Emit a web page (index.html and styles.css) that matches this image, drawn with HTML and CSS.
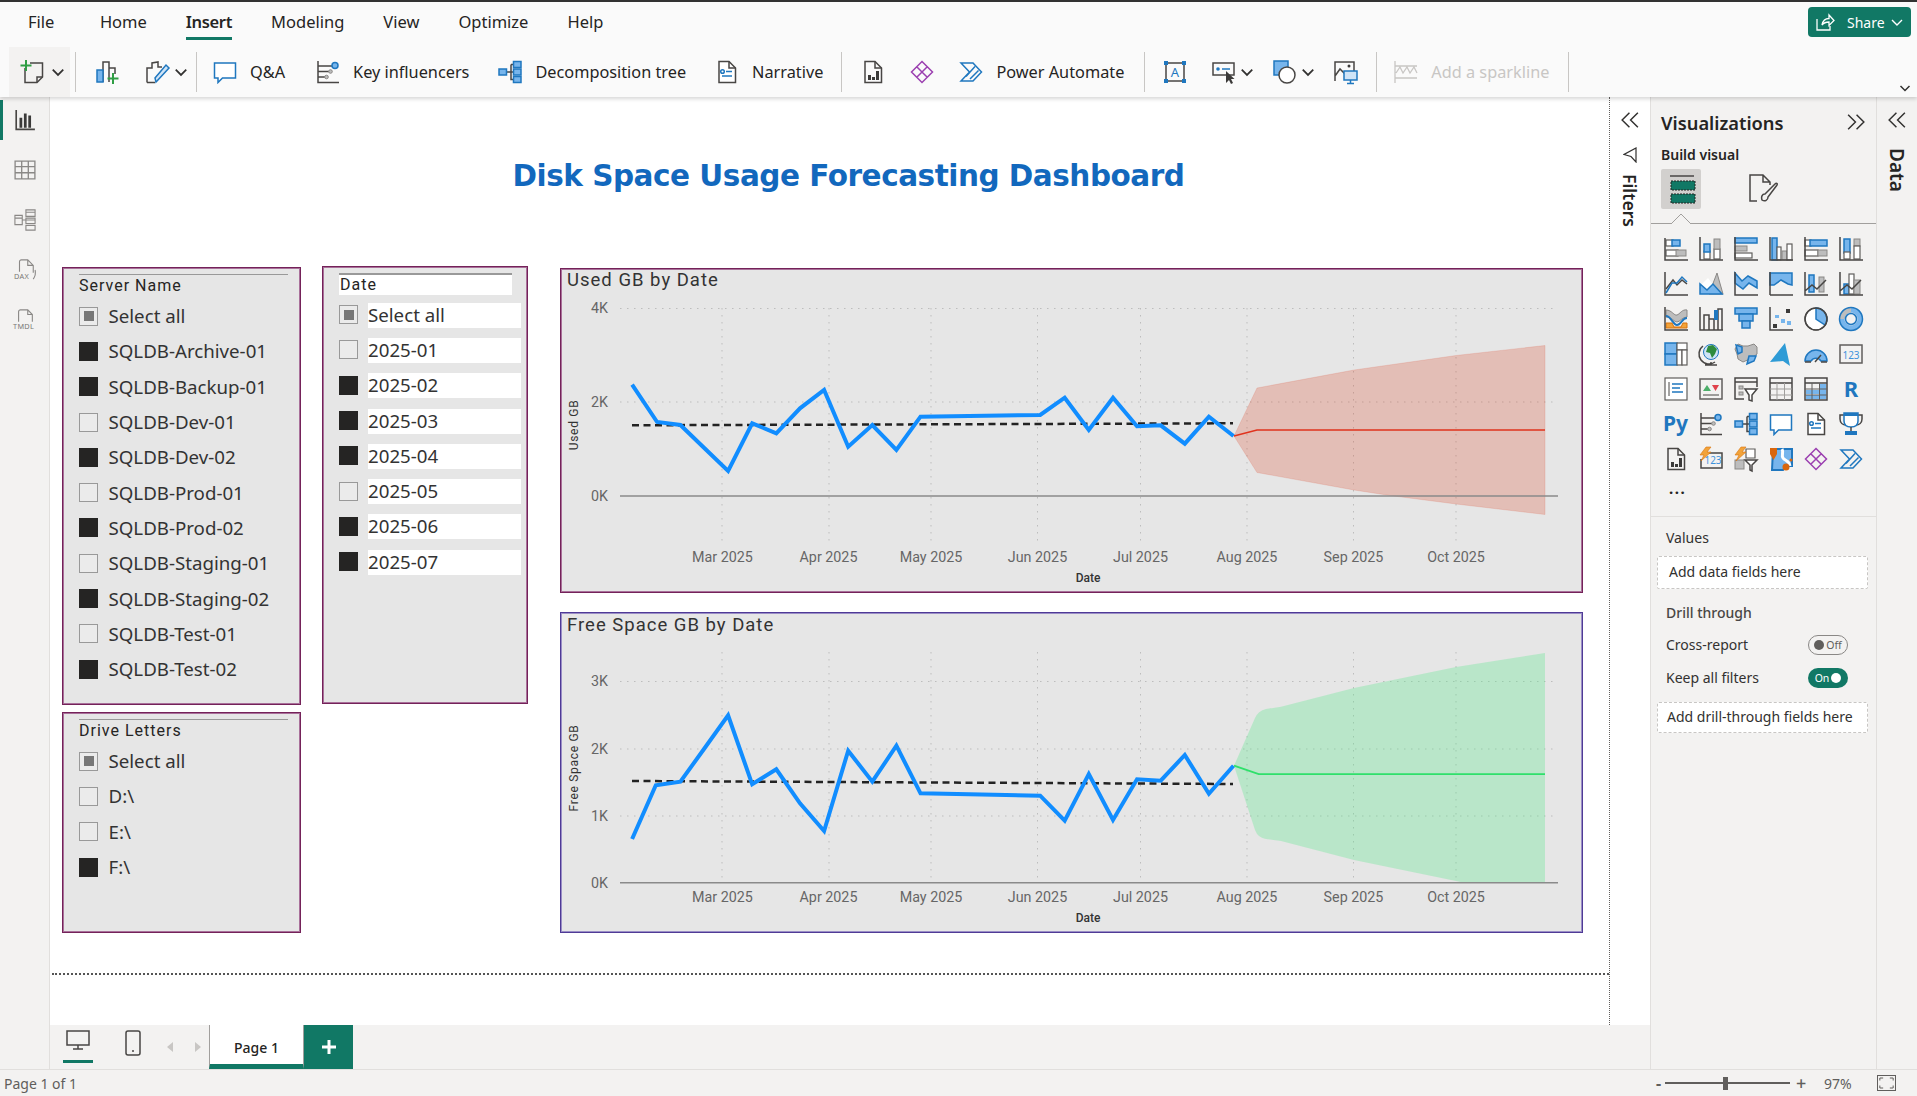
FILE: index.html
```html
<!DOCTYPE html>
<html lang="en">
<head>
<meta charset="utf-8">
<title>Disk Space Usage Forecasting Dashboard</title>
<link rel="stylesheet" href="styles.css">
</head>
<body>
<svg class="defs" aria-hidden="true">
  <symbol id="i-qa" viewBox="0 0 24 24"><path class="n wf" d="M1.5 3h21v15H9.5l-4.5 4.5V18H1.5z"/></symbol>
  <symbol id="i-key" viewBox="0 0 24 24"><path class="k" d="M2 1v21.5h21M2 6h15M2 11.500h11M2 17h7"/><circle class="b" cx="19" cy="5.500" r="3"/><circle class="g" cx="14.500" cy="11.500" r="1.800"/><circle class="g" cx="10.500" cy="17" r="1.800"/></symbol>
  <symbol id="i-dec" viewBox="0 0 24 24"><path class="k" d="M8 12h5M13 4.500v15h3M13 4.500h3M13 12h3"/><rect class="b" x="1" y="9" width="7.500" height="6"/><rect class="b" x="15.500" y="1.500" width="7.500" height="6"/><rect class="b" x="15.500" y="9" width="7.500" height="6"/><rect class="b" x="15.500" y="16.500" width="7.500" height="6"/></symbol>
  <symbol id="i-nar" viewBox="0 0 24 24"><path class="k wf" d="M4 1.500h10l6.500 6.500v14.500H4z"/><path class="k" d="M14 1.500V8h6.500"/><circle class="n" cx="7.500" cy="11.500" r="1.800"/><path class="n" d="M11 11.500h6M7 16h10"/></symbol>
  <symbol id="i-pag" viewBox="0 0 24 24"><path class="k" d="M4 1.500h10l6.500 6.500v14.500H4z"/><path class="k" d="M14 1.500V8h6.500"/><path class="x" d="M7 15h3v5H7zM11 17h3v3h-3zM15 11h3v9h-3z"/></symbol>
  <symbol id="i-dia" viewBox="0 0 24 24"><path class="p" d="M12 1.500L22.500 12 12 22.500 1.500 12zM7 7l10 10M17 7L7 17"/></symbol>
  <symbol id="i-aut" viewBox="0 0 24 24"><path class="n" d="M2 3h12l8.500 9L14 21H2l8.500-9zM7 16.500l9-10M11 19l8.500-8.500"/></symbol>
  <symbol id="i-ship" viewBox="0 0 12 12"><path class="chev" d="M1.500 4l4.500 4.500L10.500 4"/></symbol>
  <symbol id="i-dbl" viewBox="0 0 16 16"><path class="dbl" d="M7.500 1.500L1 8l6.500 6.500M15 1.500L8.500 8l6.500 6.500"/></symbol>
</svg>
<div class="app">
  <div class="topline"></div>
  <header class="ribbon">
    <nav class="tabs">
      <span class="tab tab-file">File</span>
      <span class="tab">Home</span>
      <span class="tab active">Insert</span>
      <span class="tab">Modeling</span>
      <span class="tab">View</span>
      <span class="tab">Optimize</span>
      <span class="tab">Help</span>
      <button class="share">
        <svg class="share-ic" viewBox="0 0 20 20"><path d="M2 7v11h13v-4M7 13c1-5 4-6.500 7-6.500V3l5 5.500-5 5V10c-3 0-5 .5-7 3z"/></svg>
        <span>Share</span>
        <svg class="chev-w" viewBox="0 0 12 12"><path d="M1 4l5 5 5-5"/></svg>
      </button>
    </nav>
    <div class="tools">
      <div class="newbtn">
        <svg class="tic" viewBox="0 0 24 24"><path class="k" d="M5 8v14.500h12l5.500-5.500V3H10"/><path class="k" d="M17 22v-5h5.500"/><path class="plus" d="M6 0v11M0.500 5.500h11"/></svg>
        <svg class="chev-s" viewBox="0 0 12 12"><use href="#i-ship"/></svg>
      </div>
      <span class="sep sep-a"></span>
      <div class="group g-b">
        <svg class="tic" viewBox="0 0 24 24"><path class="k" d="M8 22V2h6v20M14 8h6v6"/><rect class="b" x="2" y="10" width="6" height="12"/><path class="plus" d="M18 13v11M12.500 18.500h11"/></svg>
        <span class="pair">
          <svg class="tic" viewBox="0 0 24 24"><path class="k" d="M1 22.500V8h5V3l6-1v5h4M1 22.500h8"/><path class="n lbf" d="M10 22l-1-4L20 5l3 3L11 21z"/></svg>
          <svg class="chev-s" viewBox="0 0 12 12"><use href="#i-ship"/></svg>
        </span>
      </div>
      <span class="sep"></span>
      <div class="group g-c">
        <span class="tool tool-qa"><svg class="tic"><use href="#i-qa"/></svg>Q&amp;A</span>
        <span class="tool"><svg class="tic"><use href="#i-key"/></svg>Key influencers</span>
        <span class="tool"><svg class="tic"><use href="#i-dec"/></svg>Decomposition tree</span>
        <span class="tool"><svg class="tic"><use href="#i-nar"/></svg>Narrative</span>
      </div>
      <span class="sep"></span>
      <div class="group g-d">
        <svg class="tic"><use href="#i-pag"/></svg>
        <svg class="tic"><use href="#i-dia"/></svg>
        <span class="tool"><svg class="tic"><use href="#i-aut"/></svg>Power Automate</span>
      </div>
      <span class="sep"></span>
      <div class="group g-e">
        <svg class="tic tic-first" viewBox="0 0 24 24"><rect class="k" x="3" y="3" width="18" height="18"/><path class="f" d="M1 1h4v4H1zM19 1h4v4h-4zM1 19h4v4H1zM19 19h4v4h-4z"/><text class="tb-a" x="12" y="17">A</text></svg>
        <span class="pair">
          <svg class="tic" viewBox="0 0 24 24"><rect class="k" x="1" y="3" width="21" height="12"/><circle class="f" cx="6" cy="9" r="1.800"/><path class="n" d="M10 9h8"/><path class="x" d="M14 11v12l3-3 2 4 2-1-2-4h3.500z"/></svg>
          <svg class="chev-s" viewBox="0 0 12 12"><use href="#i-ship"/></svg>
        </span>
        <span class="pair">
          <svg class="tic" viewBox="0 0 24 24"><rect class="b" x="1" y="1" width="14" height="14"/><circle class="k wf" cx="14" cy="15" r="8"/></svg>
          <svg class="chev-s" viewBox="0 0 12 12"><use href="#i-ship"/></svg>
        </span>
        <svg class="tic" viewBox="0 0 24 24"><path class="k" d="M1 21V2h19v10M1 16l5-7 6 6"/><circle class="x" cx="15" cy="6" r="1.500"/><rect class="n lbf" x="10" y="11" width="13" height="9"/><path class="n" d="M16.500 20v3M13 23.500h7"/></svg>
      </div>
      <span class="sep"></span>
      <div class="spark">
        <svg class="tic" viewBox="0 0 24 24"><path class="dis" d="M1 1v22M1 6h22M1 18h22M2 13l4-6 3 6 4-6 3 6 4-6 3 6"/></svg>
        <span>Add a sparkline</span>
      </div>
      <span class="sep"></span>
      <svg class="expand" viewBox="0 0 12 12"><use href="#i-ship"/></svg>
    </div>
  </header>

  <div class="main">
    <aside class="rail">
      <span class="rail-btn on"><svg viewBox="0 0 20 20"><path class="k" d="M2 1v17.500h17"/><path class="x" d="M5 8h2.500v9H5zM9 4h2.500v13H9zM13 6h2.500v11H13z"/></svg></span>
      <span class="rail-btn"><svg viewBox="0 0 20 20"><path class="t" d="M1 2h18v16H1zM1 7h18M1 12.500h18M7 2v16M13 2v16"/></svg></span>
      <span class="rail-btn"><svg viewBox="0 0 24 24"><path class="t" d="M1 7h8v10H1zM13 1h10v7H13zM13 10h10v6H13zM13 18h10v5H13zM9 12h4M1 10h8M13 3.500h10M13 12h10"/></svg></span>
      <span class="rail-btn"><svg viewBox="0 0 24 24"><path class="t" d="M6 14V3c0-1 1-2 2-2h7l6 6v8M15 1v6h6M23 12c1 4 0 7-2 10"/><text class="rail-t" x="0" y="22">DAX</text></svg></span>
      <span class="rail-btn"><svg viewBox="0 0 24 24"><path class="t" d="M5 14V3c0-1 1-2 2-2h8l5 5v8M15 1v5h5"/><text class="rail-t" x="-1" y="22">TMDL</text></svg></span>
    </aside>

    <div class="center">
      <div class="work">
        <section class="canvas">
          <div class="report">
            <h1 class="title">Disk Space Usage Forecasting Dashboard</h1>
            <div class="visuals">
              <div class="col col-a">
                <div class="slicer server">
                  <div class="s-head">Server Name</div>
                  <div class="s-row"><i class="cb part"></i>Select all</div>
                  <div class="s-row"><i class="cb on"></i>SQLDB-Archive-01</div>
                  <div class="s-row"><i class="cb on"></i>SQLDB-Backup-01</div>
                  <div class="s-row"><i class="cb"></i>SQLDB-Dev-01</div>
                  <div class="s-row"><i class="cb on"></i>SQLDB-Dev-02</div>
                  <div class="s-row"><i class="cb"></i>SQLDB-Prod-01</div>
                  <div class="s-row"><i class="cb on"></i>SQLDB-Prod-02</div>
                  <div class="s-row"><i class="cb"></i>SQLDB-Staging-01</div>
                  <div class="s-row"><i class="cb on"></i>SQLDB-Staging-02</div>
                  <div class="s-row"><i class="cb"></i>SQLDB-Test-01</div>
                  <div class="s-row"><i class="cb on"></i>SQLDB-Test-02</div>
                </div>
                <div class="slicer drive">
                  <div class="s-head">Drive Letters</div>
                  <div class="s-row"><i class="cb part"></i>Select all</div>
                  <div class="s-row"><i class="cb"></i>D:\</div>
                  <div class="s-row"><i class="cb"></i>E:\</div>
                  <div class="s-row"><i class="cb on"></i>F:\</div>
                </div>
              </div>
              <div class="col">
                <div class="slicer date">
                  <div class="s-head">Date</div>
                  <div class="s-row"><i class="cb part"></i><span>Select all</span></div>
                  <div class="s-row"><i class="cb"></i><span>2025-01</span></div>
                  <div class="s-row"><i class="cb on"></i><span>2025-02</span></div>
                  <div class="s-row"><i class="cb on"></i><span>2025-03</span></div>
                  <div class="s-row"><i class="cb on"></i><span>2025-04</span></div>
                  <div class="s-row"><i class="cb"></i><span>2025-05</span></div>
                  <div class="s-row"><i class="cb on"></i><span>2025-06</span></div>
                  <div class="s-row"><i class="cb on"></i><span>2025-07</span></div>
                </div>
              </div>
              <div class="col col-c">
                <div class="chart used">
                  <svg viewBox="560 268 1023 325" preserveAspectRatio="none">
                    <g class="grid">
                      <path d="M620 308.500H1553M620 402H1553"/>
                      <path d="M722 308V545M829 308V545M931 308V545M1037.500 308V545M1140.500 308V545M1247 308V545M1353.500 308V545M1456 308V545"/>
                    </g>
                    <path class="band-r" d="M1234 436L1257 388L1354 370L1456 355.500L1545 345.500V514.500L1456 504L1390 495.500L1354 490L1257 472.500z"/>
                    <path class="zero" d="M620 496H1558"/>
                    <path class="trend" d="M632 425.300L1233 423.300"/>
                    <path class="series" d="M632.100 384.700L657.100 422L680.400 425L704 447.700L728.100 471L752.200 423.300L776.300 433.300L800 408.300L824.100 390L848.200 446.700L872.300 425L896.400 450L920.500 416.700L1040.200 415L1064.700 397.700L1088.800 430L1113 397.700L1137 426.300L1160.700 425.300L1184.800 443.700L1208.900 416.700L1233.500 436"/>
                    <path class="fc-r" d="M1234 436L1257 430H1545"/>
                    <text class="c-title" x="567" y="286">Used GB by Date</text>
                    <g class="y-lab"><text x="608" y="313">4K</text><text x="608" y="407">2K</text><text x="608" y="501">0K</text></g>
                    <g class="x-lab"><text x="722.500" y="562">Mar 2025</text><text x="828.500" y="562">Apr 2025</text><text x="931" y="562">May 2025</text><text x="1037.500" y="562">Jun 2025</text><text x="1140.500" y="562">Jul 2025</text><text x="1247" y="562">Aug 2025</text><text x="1353.500" y="562">Sep 2025</text><text x="1456" y="562">Oct 2025</text></g>
                    <text class="ax-x" x="1088" y="582">Date</text>
                    <text class="ax-y" transform="translate(578 425) rotate(-90)">Used GB</text>
                  </svg>
                </div>
                <div class="chart free">
                  <svg viewBox="560 612 1023 321" preserveAspectRatio="none">
                    <g class="grid">
                      <path d="M620 681.500H1553M620 749H1553M620 816H1553"/>
                      <path d="M722 652V882M829 652V882M931 652V882M1037.500 652V882M1140.500 652V882M1247 652V882M1353.500 652V882M1456 652V882"/>
                    </g>
                    <path class="band-g" d="M1234 765.700L1255 718Q1258 711 1266 709L1281 706.700L1354 688L1456 667L1545 653V882.500H1463L1456 881L1354 860L1281 841L1266 839Q1258 838 1255 830z"/>
                    <path class="zero" d="M620 882.700H1558"/>
                    <path class="trend" d="M632 781L1233 784"/>
                    <path class="series" d="M632.100 839L655.800 785.300L680.400 781.700L704 749L728.100 715.300L752.200 784.300L776.300 769.300L800 803.300L824.100 831L848.200 750.700L872.300 781.700L896.400 745.700L920.500 793.300L1040.200 795.700L1064.700 820.700L1088.800 774L1113 820L1137 779.300L1160.700 780.700L1184.800 755L1208.900 793.700L1233.500 765.700"/>
                    <path class="fc-g" d="M1234 765.700L1258.700 774.200H1545"/>
                    <text class="c-title" x="567" y="631">Free Space GB by Date</text>
                    <g class="y-lab"><text x="608" y="686">3K</text><text x="608" y="754">2K</text><text x="608" y="821">1K</text><text x="608" y="888">0K</text></g>
                    <g class="x-lab"><text x="722.500" y="902">Mar 2025</text><text x="828.500" y="902">Apr 2025</text><text x="931" y="902">May 2025</text><text x="1037.500" y="902">Jun 2025</text><text x="1140.500" y="902">Jul 2025</text><text x="1247" y="902">Aug 2025</text><text x="1353.500" y="902">Sep 2025</text><text x="1456" y="902">Oct 2025</text></g>
                    <text class="ax-x" x="1088" y="922">Date</text>
                    <text class="ax-y" transform="translate(578 768) rotate(-90)">Free Space GB</text>
                  </svg>
                </div>
              </div>
            </div>
          </div>
        </section>
        <aside class="filters">
          <svg class="dbl-ic"><use href="#i-dbl"/></svg>
          <svg class="funnel" viewBox="0 0 14 16"><path d="M13 1v14L8 9.500 1 7.500z"/></svg>
          <span class="v-text">Filters</span>
        </aside>
      </div>
      <div class="pagebar">
        <span class="view view-on"><svg viewBox="0 0 24 20"><path class="k" d="M1 1h22v14H1zM12 15v4M7 19h10"/></svg></span>
        <span class="view view-phone"><svg viewBox="0 0 16 26"><rect class="k" x="1" y="1" width="14" height="24" rx="2"/><path class="k" d="M7 21h2"/></svg></span>
        <span class="arrow arrow-first"><svg viewBox="0 0 6 10"><path d="M6 0v10L0 5z"/></svg></span>
        <span class="arrow"><svg viewBox="0 0 6 10"><path d="M0 0v10l6-5z"/></svg></span>
        <span class="page-tab">Page 1</span>
        <span class="add-page"><svg viewBox="0 0 14 14"><path d="M7 0v14M0 7h14"/></svg></span>
      </div>
    </div>

    <aside class="viz">
      <div class="viz-head"><span>Visualizations</span><svg class="dbl-ic flip"><use href="#i-dbl"/></svg></div>
      <div class="viz-sub">Build visual</div>
      <div class="viz-tabs">
        <span class="vt-on"><svg viewBox="0 0 30 30"><path class="k" d="M4 2h24"/><rect class="gb" x="5" y="7" width="24" height="9"/><rect class="gb" x="5" y="20" width="24" height="9"/></svg></span>
        <span class="vt-off"><svg viewBox="0 0 30 30"><path class="k" d="M9 27H2V1h13l7 7v3M15 1v7h7"/><path class="k" d="M14 26c3 2 6 0 6-3l9-12c1-2-1-2-2-1L17 20c-3 0-4 3-3 6z"/></svg></span>
        <svg class="notch" viewBox="0 0 20 10"><path d="M0 10L10 0l10 10"/></svg>
      </div>
      <div class="viz-grid">
        <svg viewBox="0 0 24 24"><rect class="w" x="2" y="3" width="7" height="6"/><rect class="b" x="8" y="3" width="8" height="6"/><rect class="w" x="2" y="13" width="12" height="6"/><rect class="g" x="12" y="13" width="10" height="6"/><path class="k" d="M1 1v22h23"/></svg>
        <svg viewBox="0 0 24 24"><rect class="w" x="5" y="14" width="6" height="8"/><rect class="b" x="5" y="7" width="6" height="8"/><rect class="w" x="15" y="12" width="6" height="10"/><rect class="g" x="15" y="2" width="6" height="10"/><path class="k" d="M1 0v23h23"/></svg>
        <svg viewBox="0 0 24 24"><rect class="b" x="1" y="1" width="22" height="5"/><rect class="g" x="1" y="9" width="12" height="5"/><rect class="w" x="1" y="16" width="17" height="5"/><path class="k" d="M1 0v23h23"/></svg>
        <svg viewBox="0 0 24 24"><rect class="b" x="3" y="1" width="5" height="22"/><rect class="w" x="8" y="10" width="4" height="13"/><rect class="g" x="13" y="14" width="5" height="9"/><rect class="w" x="18" y="7" width="5" height="16"/><path class="k" d="M1 0v23h23"/></svg>
        <svg viewBox="0 0 24 24"><rect class="w" x="1" y="3" width="6" height="6"/><rect class="b" x="6" y="3" width="17" height="6"/><rect class="w" x="1" y="13" width="13" height="6"/><rect class="g" x="14" y="13" width="9" height="6"/><path class="k" d="M1 0v23h23"/></svg>
        <svg viewBox="0 0 24 24"><rect class="b" x="5" y="2" width="6" height="14"/><rect class="w" x="5" y="15" width="6" height="7"/><rect class="g" x="15" y="2" width="6" height="7"/><rect class="w" x="15" y="9" width="6" height="13"/><path class="k" d="M1 0v23h23"/></svg>

        <svg viewBox="0 0 24 24"><path class="k" d="M1 0v23h23"/><path class="k" d="M2 17l7-9 4 5 5-5 5 4"/><path class="n" d="M2 21l6-10 5 0 5-6 5 5"/></svg>
        <svg viewBox="0 0 24 24"><path class="g" d="M10 22L18 1l6 21z"/><path class="w nl" d="M3 12l6-6 6 8v8H3z"/><path class="b" d="M1 22V12l7 6 6-6 9 10z"/></svg>
        <svg viewBox="0 0 24 24"><path class="b" d="M1 1l7 8 6-5 9 5v7l-8-5-6 6-8-6z"/><path class="k" d="M1 0v23h23"/></svg>
        <svg viewBox="0 0 24 24"><path class="b" d="M1 1h22v12l-4-1-7-4-7 5-4 0z"/><path class="k" d="M1 0v23M1 23h23"/></svg>
        <svg viewBox="0 0 24 24"><rect class="b" x="5" y="3" width="5" height="17"/><rect class="g" x="15" y="5" width="5" height="15"/><path class="k" d="M1 0v23h23M1 19l7-6 5 4 9-9"/></svg>
        <svg viewBox="0 0 24 24"><rect class="b" x="5" y="12" width="5" height="10"/><rect class="w" x="10" y="2" width="5" height="20"/><rect class="g" x="15" y="8" width="6" height="14"/><path class="k" d="M1 0v23h23M1 19l7-6 5 4 9-9"/></svg>

        <svg viewBox="0 0 24 24"><path class="g" d="M2 3c6 0 8 6 11 5s5-6 10-5v7c-5 0-7 5-10 5S8 10 2 10z"/><path class="n thick" d="M2 9c5 0 7 9 11 9s5-7 10-7"/><path class="or" d="M2 16h6l2 4h7l2-4h4v5H2z"/><path class="k" d="M1 0v23h23"/></svg>
        <svg viewBox="0 0 24 24"><path class="k" d="M1 0v23h23"/><path class="k" d="M5 23V8h5v15M10 12h5v11M19 23V2h4v21"/><rect class="f" x="15" y="3" width="4" height="10"/></svg>
        <svg viewBox="0 0 24 24"><rect class="b" x="1" y="1" width="22" height="6"/><rect class="b" x="5" y="7" width="14" height="7"/><rect class="b" x="8" y="14" width="8" height="7"/></svg>
        <svg viewBox="0 0 24 24"><path class="k" d="M1 0v23h23"/><path class="x" d="M17 2h4v4h-4zM4 17h4v4H4z"/><path class="lb" d="M6 8h4v3H6zM12 12h4v4h-4zM18 14h4v4h-4z"/></svg>
        <svg viewBox="0 0 24 24"><circle class="w" cx="12" cy="12" r="11"/><path class="b" d="M12 1a11 11 0 0 1 9 17l-9-6z"/><circle class="k" cx="12" cy="12" r="11"/></svg>
        <svg viewBox="0 0 24 24"><circle class="ring" cx="12" cy="12" r="9"/><path class="ring-g" d="M3 12a9 9 0 0 1 9-9"/><circle class="n" cx="12" cy="12" r="5.500"/><circle class="n" cx="12" cy="12" r="11.500"/></svg>

        <svg viewBox="0 0 24 24"><rect class="b" x="1" y="1" width="12" height="11"/><rect class="b" x="1" y="12" width="12" height="11"/><rect class="w" x="13" y="1" width="10" height="7"/><rect class="w" x="13" y="8" width="5" height="15"/><rect class="w" x="18" y="8" width="5" height="15"/></svg>
        <svg viewBox="0 0 24 24"><circle class="n thin lbf2" cx="12" cy="10" r="7.500"/><path class="grn" d="M9 4l5-1 4 4-2 5-3 4-2-5-4-1z"/><path class="k" d="M4 4a10 10 0 0 0 12 16M12 20v2M6 23h12"/></svg>
        <svg viewBox="0 0 24 24"><path class="g" d="M1 7l3-5 5 2 5 0 6-2 3 3v7l-5 4-9 4-5-3-1-5z"/><path class="b" d="M2 3l6 2v5l-4 2zM13 22l2-8h7l-2 5z"/></svg>
        <svg viewBox="0 0 24 24"><path class="az" d="M1 20L16 1l5 23-7-5z"/></svg>
        <svg viewBox="0 0 24 24"><path class="b" d="M1 19A11 11 0 0 1 23 19h-6a6 6 0 0 0-10 0z"/><path class="k" d="M1 20h6M17 20h6M11 20l6-7"/></svg>
        <svg viewBox="0 0 24 24"><rect class="gk" x="1" y="3" width="22" height="18"/><text class="t123" x="12" y="16.500">123</text></svg>

        <svg viewBox="0 0 24 24"><rect class="w" x="1" y="1" width="22" height="22"/><path class="k thin" d="M5 5v14"/><path class="n" d="M8 7h11M8 11h8M8 15h11"/></svg>
        <svg viewBox="0 0 24 24"><rect class="gk" x="1" y="2" width="22" height="20"/><path class="tg" d="M4 14l4-6 4 6z"/><path class="tr" d="M13 8h7l-3.500 6z"/><path class="k thin" d="M4 18h16"/></svg>
        <svg viewBox="0 0 24 24"><path class="k" d="M10 22H1V1h22v9M1 5h22"/><rect class="g" x="5" y="9" width="4" height="3"/><rect class="g" x="5" y="15" width="4" height="3"/><path class="k wf" d="M11 12h12l-5 6v6l-3-1v-5z"/></svg>
        <svg viewBox="0 0 24 24"><path class="k" d="M1 1h22v22H1zM1 6h22"/><path class="k thin gl" d="M1 12h22M1 18h22M8 6v17M15.500 6v17"/></svg>
        <svg viewBox="0 0 24 24"><path class="k" d="M1 1h22v22H1zM1 6h22"/><path class="lb" d="M2 13h14v4H2zM2 18h14v4H2zM16 7h6v15h-6z"/><path class="k thin gl2" d="M1 12h22M1 18h22M8 6v17M15.500 6v17"/></svg>
        <svg viewBox="0 0 24 24"><text class="big-t" x="12" y="20">R</text></svg>

        <svg viewBox="0 0 24 24"><text class="big-p" x="-1" y="19">Py</text></svg>
        <svg viewBox="0 0 24 24"><use href="#i-key"/></svg>
        <svg viewBox="0 0 24 24"><use href="#i-dec"/></svg>
        <svg viewBox="0 0 24 24"><use href="#i-qa"/></svg>
        <svg viewBox="0 0 24 24"><use href="#i-nar"/></svg>
        <svg viewBox="0 0 24 24"><path class="k" d="M5 3H1v4c0 4 3 6 6 6M19 3h4v4c0 4-3 6-6 6"/><path class="wf n" d="M5 1h14v8c0 4-3 6-7 6s-7-2-7-6z"/><path class="f" d="M5 1h14v3H5z"/><path class="k" d="M12 15v4"/><rect class="f" x="6" y="19" width="12" height="4"/></svg>

        <svg viewBox="0 0 24 24"><use href="#i-pag"/></svg>
        <svg viewBox="0 0 24 24"><path class="k" d="M7 6h16v15H2V12"/><text class="t123" x="14" y="17">123</text><path class="bolt" d="M7 0h5L8 5h4L2 14l3-6H1z"/></svg>
        <svg viewBox="0 0 24 24"><rect class="g" x="1" y="13" width="9" height="9"/><path class="w" d="M12 2h9v9h-9z"/><path class="k wf" d="M11 13h12l-5 5v6l-2-1v-5z"/><path class="bolt" d="M7 0h5L8 5h4L2 14l3-6H1z"/></svg>
        <svg viewBox="0 0 24 24"><path class="mapf" d="M4 2h19v17h-6l-3 4H3z"/><path class="mapw" d="M13 2c2 4-1 6 1 9s6 2 7 8"/><path class="om" d="M1 1h7v6l-3.500 6L1 7z"/><circle class="om" cx="17" cy="20" r="3.500"/><circle class="om" cx="22" cy="13" r="1.500"/></svg>
        <svg viewBox="0 0 24 24"><use href="#i-dia"/></svg>
        <svg viewBox="0 0 24 24"><use href="#i-aut"/></svg>
      </div>
      <div class="viz-more">...</div>
      <div class="viz-fields">
        <div class="f-label">Values</div>
        <div class="f-well">Add data fields here</div>
        <div class="f-drill">Drill through</div>
        <div class="f-row"><span>Cross-report</span><span class="toggle off"><i></i>Off</span></div>
        <div class="f-row"><span>Keep all filters</span><span class="toggle ton">On<i></i></span></div>
        <div class="f-well well-b">Add drill-through fields here</div>
      </div>
    </aside>

    <aside class="data">
      <svg class="dbl-ic"><use href="#i-dbl"/></svg>
      <span class="v-text v-data">Data</span>
    </aside>
  </div>

  <footer class="status">
    <span>Page 1 of 1</span>
    <div class="zoom">
      <span class="z-minus">-</span>
      <span class="z-track"><i></i></span>
      <span class="z-plus">+</span>
      <span class="z-val">97%</span>
      <span class="z-fit"><svg viewBox="0 0 18 14"><path d="M1 4V1h4M13 1h4v3M17 10v3h-4M5 13H1v-3"/></svg></span>
    </div>
  </footer>
</div>
</body>
</html>
```
FILE: styles.css
```css
* { box-sizing: border-box; }
html, body { margin: 0; height: 100%; overflow: hidden; }
body { font-family: "Noto Sans", "Open Sans", sans-serif; color: #252423; background: #fff; }
.defs { width: 0; height: 0; display: block; overflow: hidden; }
.app { width: 1917px; height: 1096px; display: flex; flex-direction: column; }
.topline { height: 2px; background: #333; flex: none; }

/* shared svg strokes */
.k { fill: none; stroke: #484644; stroke-width: 1.5; }
.w { fill: #fff; stroke: #605e5c; stroke-width: 1.2; }
.b { fill: #77b5ec; stroke: #1f77bf; stroke-width: 1.5; }
.g { fill: #bdbdbd; stroke: #8a8886; stroke-width: 1; }
.gk { fill: #f3f2f1; stroke: #605e5c; stroke-width: 1.5; }
.n { fill: none; stroke: #1f77bf; stroke-width: 1.5; }
.f { fill: #1f77bf; }
.x { fill: #3b3a39; }
.lb { fill: #77b5ec; }
.p { fill: none; stroke: #9b3fb0; stroke-width: 1.5; }
.t { fill: none; stroke: #8a8886; stroke-width: 1.2; }
.wf { fill: #fff; }
.lbf { fill: #cfe4f7; }
.lbf2 { fill: #cfe4f7; }
.thin { stroke-width: 1; }
.thick { stroke-width: 2; }
.gl { stroke: #a19f9d; }
.gl2 { stroke: #605e5c; }
.nl { stroke: none; }
.plus { fill: none; stroke: #2f9e44; stroke-width: 2; }
.dis { fill: none; stroke: #c8c6c4; stroke-width: 1.3; }
.or { fill: #f2a33a; stroke: #d9730d; stroke-width: 1; }
.ring { fill: none; stroke: #77b5ec; stroke-width: 5; }
.ring-g { fill: none; stroke: #bdbdbd; stroke-width: 5; }
.grn { fill: #2e8b3d; }
.az { fill: #2e9bd6; }
.tg { fill: #4caf6a; }
.tr { fill: #e0424b; }
.bolt { fill: #f2a33a; stroke: #d9730d; stroke-width: .6; }
.mapf { fill: #77b5ec; stroke: #1f77bf; stroke-width: 2; }
.mapw { fill: none; stroke: #fff; stroke-width: 3; }
.om { fill: #d9660d; }
.chev { fill: none; stroke: #323130; stroke-width: 1.5; }
.dbl { fill: none; stroke: #323130; stroke-width: 1.3; }
.gb { fill: #117865; stroke: #252423; stroke-width: 1; stroke-dasharray: 2 1; }

/* ribbon */
.ribbon { flex: none; height: 95px; background: #fafafa; box-shadow: 0 2px 4px rgba(0,0,0,.16); position: relative; z-index: 2; }
.tabs { height: 45px; display: flex; align-items: flex-start; padding: 5px 6px 0 28px; gap: 39px; font-size: 16.500px; }
.tab { line-height: 30px; height: 33px; border-bottom: 3px solid transparent; white-space: nowrap; }
.tab-file { margin-right: 6.500px; }
.tab.active { font-weight: 600; letter-spacing: -.35px; border-bottom-color: #117865; }
.share { margin-left: auto; width: 103px; height: 30px; border: 0; border-radius: 4px; background: #117865; color: #fff; display: flex; align-items: center; padding: 0 8px 0 7px; font: 14px "Noto Sans", sans-serif; }
.share-ic { width: 20px; height: 20px; margin-right: 12px; fill: none; stroke: #fff; stroke-width: 1.3; }
.chev-w { width: 12px; height: 12px; margin-left: 6px; fill: none; stroke: #fff; stroke-width: 1.4; }
.tools { height: 50px; display: flex; align-items: center; padding-left: 9px; font-size: 16.300px; white-space: nowrap; }
.tic { width: 24px; height: 24px; flex: none; overflow: visible; }
.tic-first { margin-right: 6px; }
.chev-s { width: 14px; height: 14px; flex: none; }
.newbtn { width: 61px; height: 50px; background: #f3f2f1; display: flex; align-items: center; gap: 7px; padding-left: 11px; }
.sep { width: 1px; height: 40px; background: #c8c6c4; flex: none; }
.sep-a { margin-left: 5px; }
.group { display: flex; align-items: center; }
.g-b { padding: 0 8px 0 19px; gap: 27px; }
.g-c { padding: 0 18px 0 16px; gap: 29px; }
.g-d { padding: 0 20px 0 19px; gap: 25px; }
.g-e { padding: 0 18px 0 18px; gap: 19px; }
.pair { display: flex; align-items: center; gap: 4px; }
.tool { display: flex; align-items: center; gap: 13px; }
.tool-qa { margin-right: 2px; }
.spark { display: flex; align-items: center; gap: 13px; padding: 0 19px 0 17px; color: #c8c6c4; }
.expand { width: 12px; height: 12px; margin-left: 330px; align-self: flex-end; margin-bottom: 3px; }
.tb-a { font: 13px "Noto Sans", sans-serif; fill: #1f77bf; text-anchor: middle; }

/* main */
.main { flex: 1; display: flex; min-height: 0; }
.rail { width: 50px; flex: none; background: #f3f2f1; border-right: 1px solid #e1dfdd; display: flex; flex-direction: column; padding-top: 3px; gap: 10px; }
.rail-btn { height: 40px; display: flex; align-items: center; justify-content: center; padding-right: 3px; border-left: 3px solid transparent; }
.rail-btn.on { border-left-color: #117865; }
.rail-btn svg { width: 22px; height: 22px; overflow: visible; }
.rail-t { font: 8px "Noto Sans", sans-serif; fill: #7a7876; letter-spacing: .3px; }
.center { width: 1600px; flex: none; display: flex; flex-direction: column; }
.work { flex: 1; display: flex; min-height: 0; }
.canvas { width: 1560px; flex: none; background: #fff; border-right: 1px dotted #605e5c; padding-left: 2px; }
.report { height: 878px; border-bottom: 2px dotted #555; padding-left: 10px; }
.title { margin: 0; height: 169px; padding: 57px 0 0 27px; width: 1546px; text-align: center; font: 700 29.500px/44px "DejaVu Sans", sans-serif; letter-spacing: -.48px; color: #1268bd; }
.visuals { display: flex; align-items: flex-start; }
.col { display: flex; flex-direction: column; }
.col-a { width: 239px; margin: 1px 21px 0 0; gap: 7px; }
.col-c { width: 1023px; margin: 2px 0 0 32px; gap: 19px; }
.slicer { background: #e6e6e6; border: 1px solid #742259; box-shadow: inset 0 0 0 1px #a9709a; font-size: 18.700px; color: #333; }
.server { height: 438px; padding: 6px 12px 0 16px; }
.drive { height: 221px; padding: 6px 12px 0 16px; }
.date { width: 206px; height: 438px; padding: 6px 6px 0 16px; }
.s-head { height: 24.500px; border-top: 1.500px solid #999; font: 400 16px/22px Roboto, sans-serif; letter-spacing: 1px; color: #252423; }
.date .s-head { width: 173px; height: 22px; background: #fff; border-top-width: 2px; line-height: 19px; padding-left: 1px; margin-bottom: 2px; }
.s-row { height: 35.300px; display: flex; align-items: center; line-height: 24px; white-space: nowrap; }
.date .s-row span { flex: 1; height: 25px; background: #fff; margin-top: 1px; }
.cb { width: 19px; height: 19px; flex: none; border: 1.500px solid #999; background: #ebebeb; margin-right: 10.500px; display: flex; align-items: center; justify-content: center; }
.date .cb { margin-right: 10px; }
.cb.on { background: #252423; border-color: #252423; }
.cb.part::after { content: ""; width: 10px; height: 10px; background: #777; }

/* charts */
.chart { background: #e6e6e6; border: 1px solid #742259; box-shadow: inset 0 0 0 1px #a9709a; }
.chart svg { display: block; margin: -1px; width: calc(100% + 2px); height: calc(100% + 2px); }
.used { height: 325px; }
.free { height: 321px; border-color: #4f3a96; box-shadow: inset 0 0 0 1px #9a8ec6; }
.grid path { fill: none; stroke: #bdbdbd; stroke-width: 1; stroke-dasharray: 1.500 5.500; }
.zero { fill: none; stroke: #8a8a8a; stroke-width: 1.500; }
.band-r { fill: rgba(220,70,40,.25); stroke: rgba(220,70,40,.15); }
.band-g { fill: rgba(82,233,136,.3); }
.trend { fill: none; stroke: #222; stroke-width: 2.500; stroke-dasharray: 7 4.500; }
.series { fill: none; stroke: #118dff; stroke-width: 4; stroke-linejoin: miter; }
.fc-r { fill: none; stroke: #e0331d; stroke-width: 1.500; }
.fc-g { fill: none; stroke: #2fe06b; stroke-width: 1.800; }
.c-title { font: 400 18.500px Roboto, sans-serif; letter-spacing: 1px; fill: #333; }
.y-lab text { font: 400 14.300px Roboto, sans-serif; fill: #666; text-anchor: end; }
.x-lab text { font: 400 14.300px Roboto, sans-serif; fill: #666; text-anchor: middle; }
.ax-x { font: 500 12px Roboto, sans-serif; fill: #333; text-anchor: middle; }
.ax-y { font: 400 12px Roboto, sans-serif; letter-spacing: .7px; fill: #333; text-anchor: middle; }

/* filters and side panes */
.filters { width: 40px; flex: none; background: #fff; display: flex; flex-direction: column; align-items: center; padding-top: 14px; }
.dbl-ic { width: 18px; height: 18px; flex: none; }
.flip { transform: scaleX(-1); }
.funnel { width: 14px; height: 16px; margin-top: 18px; fill: none; stroke: #323130; stroke-width: 1.2; }
.v-text { writing-mode: vertical-rl; font-size: 17.500px; font-weight: 600; line-height: 20px; margin-top: 11px; }
.v-data { font-size: 19px; margin-top: 19px; }
.viz { width: 227px; flex: none; background: #f3f2f1; border-left: 1px solid #e1dfdd; border-right: 1px solid #e1dfdd; }
.viz-head { height: 30px; margin: 10px 11px 0 10px; display: flex; align-items: center; justify-content: space-between; font-size: 18.300px; font-weight: 600; }
.viz-sub { margin: 8px 0 0 10px; line-height: 20px; font-size: 14px; font-weight: 600; }
.viz-tabs { height: 55px; margin-top: 4px; padding-left: 10px; display: flex; align-items: flex-start; gap: 46px; border-bottom: 1px solid #a19f9d; position: relative; }
.vt-on { width: 40px; height: 40px; background: #d2d0ce; border-radius: 2px; display: flex; align-items: center; justify-content: center; }
.vt-on svg { width: 30px; height: 30px; }
.vt-off { width: 32px; height: 40px; display: flex; align-items: center; justify-content: center; }
.vt-off svg { width: 30px; height: 30px; }
.notch { position: absolute; left: 20px; bottom: -1px; width: 20px; height: 10px; fill: #f3f2f1; stroke: #a19f9d; stroke-width: 1; }
.viz-grid { display: grid; grid-template-columns: repeat(6, 35px); grid-auto-rows: 35px; padding: 7px 0 0 7px; }
.viz-grid svg { width: 24px; height: 24px; margin: 5.500px; overflow: visible; }
.big-t { font: 700 22px "Noto Sans", sans-serif; fill: #1f77bf; text-anchor: middle; }
.big-p { font: 700 21px "Noto Sans", sans-serif; fill: #1f77bf; }
.t123 { font: 10px "Noto Sans", sans-serif; fill: #3f93dc; text-anchor: middle; }
.viz-more { height: 35px; padding-left: 18px; font-size: 15px; font-weight: 700; line-height: 24px; letter-spacing: 1.500px; }
.viz-fields { margin-top: 5px; border-top: 1px solid #e1dfdd; padding: 10px 8px 0 6px; font-size: 14px; color: #323130; }
.f-label { line-height: 22px; padding-left: 9px; }
.f-well { height: 33px; margin: 7px 0 0; background: #fff; border: 1px dashed #c8c6c4; border-radius: 2px; line-height: 30px; padding-left: 11px; }
.f-drill { line-height: 22px; padding-left: 9px; margin: 13px 0 4px; font-weight: 500; color: #484644; }
.f-row { height: 33px; padding-left: 9px; padding-right: 20px; display: flex; align-items: center; justify-content: space-between; }
.toggle { width: 40px; height: 20px; border-radius: 10px; display: flex; align-items: center; justify-content: center; gap: 2px; font-size: 10.500px; }
.toggle i { width: 10px; height: 10px; border-radius: 50%; }
.off { border: 1px solid #8a8886; color: #605e5c; }
.off i { background: #605e5c; }
.ton { background: #117865; color: #fff; }
.ton i { background: #fff; }
.well-b { height: 31px; margin-top: 8px; padding-left: 9px; line-height: 28px; }
.data { width: 40px; flex: none; background: #f3f2f1; display: flex; flex-direction: column; align-items: center; padding-top: 14px; }

/* page bar */
.pagebar { height: 44px; flex: none; background: #f3f2f1; display: flex; align-items: stretch; }
.view { display: flex; flex: none; align-items: flex-start; justify-content: center; }
.view-on { width: 30px; margin-left: 13px; padding-top: 5px; height: 38px; border-bottom: 3px solid #117865; }
.view-on svg { width: 24px; height: 20px; }
.view-phone { width: 16px; margin-left: 32px; padding-top: 5px; }
.view-phone svg { width: 16px; height: 26px; }
.arrow { width: 28px; flex: none; fill: #c8c6c4; display: flex; align-items: center; justify-content: center; }
.arrow svg { width: 6px; height: 10px; }
.arrow-first { margin-left: 15px; }
.page-tab { width: 95px; margin-left: -3px; background: #fff; border-left: 1px solid #a19f9d; border-right: 1px solid #a19f9d; border-bottom: 5px solid #117865; font-size: 14px; font-weight: 500; text-align: center; line-height: 46px; }
.add-page { width: 49px; background: #117865; display: flex; align-items: center; justify-content: center; }
.add-page svg { width: 14px; height: 14px; fill: none; stroke: #fff; stroke-width: 3; }

/* status */
.status { height: 27px; flex: none; background: #f3f2f1; border-top: 1px solid #e1dfdd; display: flex; align-items: center; justify-content: space-between; padding: 0 21px 0 4px; font-size: 14px; color: #605e5c; }
.zoom { display: flex; align-items: center; }
.z-minus { font-size: 16px; font-weight: 700; width: 9px; }
.z-track { width: 125px; height: 2px; background: #605e5c; display: flex; justify-content: center; align-items: center; padding-right: 4px; }
.z-track i { width: 5px; height: 13px; background: #605e5c; }
.z-plus { font-size: 18px; font-weight: 500; margin-left: 6px; width: 12px; }
.z-val { margin-left: 16px; width: 53px; }
.z-fit { width: 19px; height: 16px; border: 1px solid #605e5c; display: flex; align-items: center; justify-content: center; }
.z-fit svg { width: 15px; height: 12px; fill: none; stroke: #605e5c; stroke-width: 1.2; }
```
